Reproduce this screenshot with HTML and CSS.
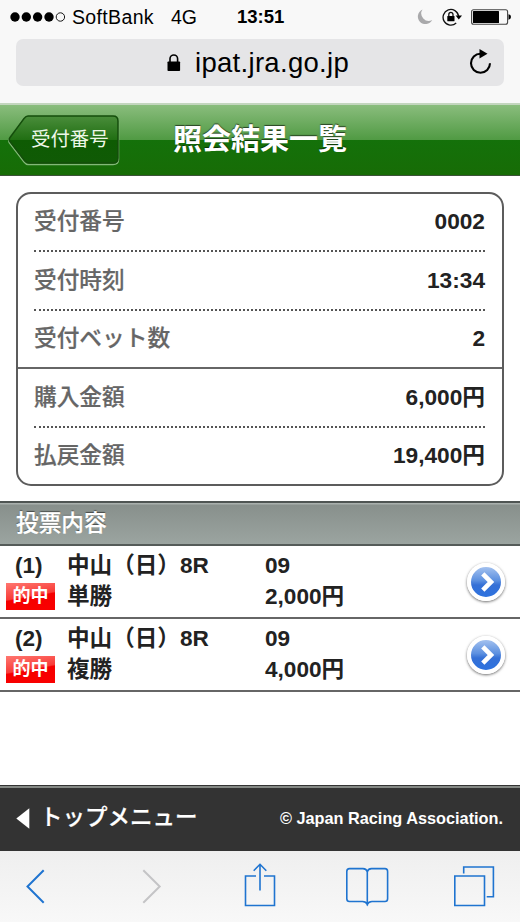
FILE: index.html
```html
<!DOCTYPE html>
<html lang="ja">

<head>
    <meta charset="UTF-8">
    <meta name="viewport" content="width=device-width, initial-scale=1.0">
    <title>照会結果一覧</title>
    <link rel="stylesheet" href="styles.css">
</head>

<body>
    <div class="browser-top">
        <div class="status-bar">
            <div class="carrier">
                <svg class="signal" width="56" height="12" viewBox="0 0 56 12">
                    <circle cx="5" cy="6" r="4.7" />
                    <circle cx="16.3" cy="6" r="4.7" />
                    <circle cx="27.6" cy="6" r="4.7" />
                    <circle cx="39" cy="6" r="4.7" />
                    <circle cx="50.4" cy="6" r="4.2" fill="none" stroke="#000" stroke-width="0.9" />
                </svg>
                <span class="carrier-name">SoftBank</span>
                <span class="network">4G</span>
            </div>
            <div class="clock">13:51</div>
            <div class="indicators">
                <svg width="16" height="18" viewBox="0 0 16 18">
                    <path d="M5.5 1.5 A7.6 7.6 0 1 0 15.2 12 A7.4 7.4 0 0 1 5.5 1.5 Z" fill="#a9a9ab" />
                </svg>
                <svg class="rotation" width="20" height="18" viewBox="0 0 20 18">
                    <path d="M14.2 15 A7.8 7.8 0 1 1 16.6 8.2" fill="none" stroke="#111" stroke-width="1.3" />
                    <path d="M13.6 7.6 H20 L16.8 11.4 Z" />
                    <rect x="5.3" y="8" width="7.2" height="5.2" rx="0.5" />
                    <path d="M6.8 8.5 V6.5 A2.1 2.2 0 0 1 11 6.5 V8.5" fill="none" stroke="#111" stroke-width="1.3" />
                </svg>
                <svg class="battery" width="40" height="16" viewBox="0 0 40 16">
                    <rect x="0.6" y="0.7" width="36" height="14.6" rx="2" fill="none" stroke="#444" stroke-width="1.1" />
                    <rect x="2" y="2" width="26" height="12" rx="0.5" />
                    <path d="M37.5 5.3 Q40 5.6 40 8 Q40 10.4 37.5 10.7 Z" />
                </svg>
            </div>
        </div>
        <div class="address-bar">
            <svg class="lock" width="14" height="18" viewBox="0 0 14 18">
                <rect x="0.5" y="7.5" width="12.6" height="9.5" rx="0.8" />
                <path d="M3 8 V4.8 A3.8 3.8 0 0 1 10.6 4.8 V8" fill="none" stroke="#000" stroke-width="1.6" />
            </svg>
            <span class="url">ipat.jra.go.jp</span>
            <svg class="reload" width="24" height="26" viewBox="0 0 24 26">
                <path d="M12.5 4.7 A9.5 9.5 0 1 0 22 14.2" fill="none" stroke="#000" stroke-width="2.1" />
                <path d="M11.5 0 L19.5 4.7 L11.5 9.4 Z" />
            </svg>
        </div>
    </div>

    <div class="header">
        <a href="#" class="back-button">
            <svg class="back-shape" width="112" height="51" viewBox="0 0 112 51">
                <defs>
                    <linearGradient id="backFill" x1="0" y1="0" x2="0" y2="1">
                        <stop offset="0" stop-color="#4a8d3b" />
                        <stop offset="0.5" stop-color="#216f13" />
                        <stop offset="0.52" stop-color="#0e5b03" />
                        <stop offset="1" stop-color="#105a05" />
                    </linearGradient>
                </defs>
                <path d="M18.5 2.3 H105 Q110.6 2.3 110.6 7.3 V44.5 Q110.6 49.5 105 49.5 H20 Q18 49.5 16 47 L1.5 28 Q0 26 1.5 24 L14.5 4.5 Q16 2.3 18.5 2.3 Z" fill="none" stroke="#83b878" stroke-width="1.3" />
                <path d="M20 1 H105 Q110 1 110 6 V43 Q110 48 105 48 H21 Q18.5 48 16.5 45.5 L2 26.5 Q0.5 24.5 2 22.5 L16 3.5 Q18 1 20 1 Z" fill="url(#backFill)" stroke="#144e0b" stroke-width="1.5" />
            </svg>
            <span class="back-label">受付番号</span>
        </a>
        <h1>照会結果一覧</h1>
    </div>

    <div class="content">
        <div class="summary">
            <div class="summary-row"><span class="label">受付番号</span><span class="value">0002</span></div>
            <div class="summary-row"><span class="label">受付時刻</span><span class="value">13:34</span></div>
            <div class="summary-row group-end"><span class="label">受付ベット数</span><span class="value">2</span></div>
            <div class="summary-row"><span class="label">購入金額</span><span class="value">6,000円</span></div>
            <div class="summary-row"><span class="label">払戻金額</span><span class="value">19,400円</span></div>
        </div>

        <h2>投票内容</h2>

        <div class="bet">
            <div class="bet-number">
                <span class="number">(1)</span>
                <span class="hit">的中</span>
            </div>
            <div class="bet-race">
                <span>中山（日）8R</span>
                <span>単勝</span>
            </div>
            <div class="bet-amount">
                <span>09</span>
                <span>2,000円</span>
            </div>
            <a href="#" class="detail-button">
                <svg width="24" height="24" viewBox="0 0 24 24">
                    <path d="M8.8 3.8 L17 12 L8.8 20.2" fill="none" stroke="#fff" stroke-width="4.6" />
                </svg>
            </a>
        </div>
        <div class="bet">
            <div class="bet-number">
                <span class="number">(2)</span>
                <span class="hit">的中</span>
            </div>
            <div class="bet-race">
                <span>中山（日）8R</span>
                <span>複勝</span>
            </div>
            <div class="bet-amount">
                <span>09</span>
                <span>4,000円</span>
            </div>
            <a href="#" class="detail-button">
                <svg width="24" height="24" viewBox="0 0 24 24">
                    <path d="M8.8 3.8 L17 12 L8.8 20.2" fill="none" stroke="#fff" stroke-width="4.6" />
                </svg>
            </a>
        </div>
    </div>

    <div class="footer">
        <a href="#" class="top-menu">
            <svg width="14" height="22" viewBox="0 0 14 22">
                <path d="M0.3 10.5 L13.3 0.2 V20.8 Z" fill="#fff" />
            </svg>
            <span>トップメニュー</span>
        </a>
        <span class="copyright">© Japan Racing Association.</span>
    </div>

    <div class="toolbar">
        <svg width="520" height="71" viewBox="0 0 520 71" fill="none" stroke="#1f74d0" stroke-width="1.6">
            <!-- back / forward -->
            <path d="M43.7 19.2 L27.5 35.5 L43.7 51.7" stroke-width="2" />
            <path d="M143.3 19.2 L159.7 35.5 L143.3 51.7" stroke="#c4c4c6" stroke-width="2" />
            <!-- share -->
            <path d="M256 25 H245.5 V54.5 H274.5 V25 H264 M260 39.5 V13.5 M253.7 19.8 L260 13.3 L266.3 19.8" />
            <!-- bookmarks -->
            <path d="M367.3 54.5 V20.8 Q366.5 17.6 363 17.6 H349.5 Q346.8 17.6 346.8 20.5 V47.8 Q346.8 50.5 349.5 50.5 H362.5 Q366 50.5 367.3 53.5 Q368.6 50.5 372 50.5 H385 Q387.6 50.5 387.6 47.8 V20.5 Q387.6 17.6 385 17.6 H371.5 Q368 17.6 367.3 20.8" />
            <!-- tabs -->
            <path d="M454.8 25 H484.5 V54.5 H454.8 Z M463.7 22.5 V16 H493.4 V45.7 H486.7" />
        </svg>
    </div>
</body>

</html>
```
FILE: styles.css
```css
* {
    box-sizing: border-box;
}

body {
    margin: 0;
    width: 520px;
    height: 924px;
    overflow: hidden;
    display: flex;
    flex-direction: column;
    background: #fff;
    color: #222;
    font-family: 'Liberation Sans', 'Noto Sans CJK JP', sans-serif;
}

a {
    color: inherit;
    text-decoration: none;
}

svg {
    display: block;
    flex-shrink: 0;
}

h1,
h2 {
    margin: 0;
}

/* Browser chrome */
.browser-top {
    height: 103px;
    background: #f8f8f8;
    color: #000;
}

.status-bar {
    height: 39px;
    padding: 0 9px 5px 10px;
    display: grid;
    grid-template-columns: 227px 1fr auto;
    align-items: center;
}

.carrier {
    display: flex;
    align-items: center;
    font-size: 19.5px;
    line-height: 24px;
}

.carrier-name {
    margin-left: 6px;
    width: 99px;
    letter-spacing: 0.35px;
}

.clock {
    font-size: 18.5px;
    font-weight: bold;
}

.indicators {
    display: flex;
    align-items: center;
}

.rotation {
    margin-left: 9px;
}

.battery {
    margin-left: 9px;
}

.address-bar {
    height: 47px;
    margin: 0 16px;
    padding: 0 12px 0 151px;
    border-radius: 7px;
    background: #e5e5e7;
    display: flex;
    align-items: center;
}

.url {
    margin-left: 14px;
    font-size: 27.5px;
    letter-spacing: 0.3px;
}

.reload {
    margin-left: auto;
    margin-bottom: 1px;
}

/* Page header */
.header {
    height: 73px;
    padding-left: 8px;
    display: flex;
    align-items: center;
    border-top: 2px solid #c3d6be;
    border-bottom: 1px solid #3c5237;
    background: linear-gradient(#8abd7d 0, #509a43 35px, #14710a 35px, #176c06 100%);
    color: #fff;
}

.back-button {
    position: relative;
    width: 112px;
    height: 51px;
    padding: 0 0 2px 23px;
    display: flex;
    align-items: center;
    font-size: 19.4px;
}

.back-shape {
    position: absolute;
    left: 0;
    top: 0;
}

.back-label {
    position: relative;
    color: #eef8e9;
    line-height: 28px;
}

h1 {
    margin-left: 53px;
    font-size: 29px;
    line-height: 40px;
    text-shadow: 0 -1px 1px rgba(0, 0, 0, 0.6);
}

/* Receipt summary */
.content {
    height: 609px;
    padding-top: 16px;
}

.summary {
    margin: 0 16px;
    height: 294px;
    border: 2px solid #5c5c5c;
    border-radius: 15px;
    display: grid;
    grid-template-rows: 58px 59px 58px 59px 56px;
    font-size: 22.7px;
}

.summary-row {
    margin: 0 17px 0 16px;
    padding-bottom: 2px;
    display: flex;
    justify-content: space-between;
    align-items: center;
    line-height: 30px;
    border-bottom: 2px dotted #555;
}

.summary-row.group-end {
    margin: 0;
    padding: 0 17px 2px 16px;
    border-bottom: 2px solid #666;
}

.summary-row:last-child {
    border-bottom: none;
}

.label {
    color: #666;
    font-weight: 500;
    -webkit-text-stroke: 0.2px #666;
}

.value {
    font-weight: bold;
}

h2 {
    margin-top: 15px;
    height: 45px;
    padding-left: 16px;
    border-top: 2px solid #4f5553;
    border-bottom: 2px solid #555b59;
    background: linear-gradient(#a9b0ad 0, #a9b0ad 1px, #88908c 2px, #9ba4a0 100%);
    color: #fff;
    font-size: 22.7px;
    font-weight: 500;
    line-height: 41px;
    text-shadow: 0 -1px 1px rgba(0, 0, 0, 0.5);
    -webkit-text-stroke: 0.3px #fff;
}

/* Bet list */
.bet {
    height: 73px;
    padding: 4px 15px 0 6px;
    display: grid;
    grid-template-columns: 61px 198px 1fr 38px;
    border-bottom: 2px solid #666;
    font-size: 22.6px;
    font-weight: bold;
    line-height: 31px;
}

.bet-number,
.bet-race,
.bet-amount {
    display: flex;
    flex-direction: column;
}

.number {
    padding-left: 9px;
}

.hit {
    width: 49px;
    height: 27px;
    margin-top: 2px;
    background: linear-gradient(170deg, #ff7770 0, #f83c38 48%, #f50000 52%, #fa0000 100%);
    color: #fff;
    font-size: 18px;
    line-height: 27px;
    text-align: center;
}

.detail-button {
    width: 38px;
    height: 38px;
    margin-top: 13px;
    border: 4px solid #fff;
    border-radius: 50%;
    background: linear-gradient(#a3c1ef, #5c90e0 45%, #3570d6 60%, #2d72df);
    box-shadow: 0 1px 3px rgba(0, 0, 0, 0.6);
    display: flex;
    align-items: center;
    justify-content: center;
}

/* Footer */
.footer {
    height: 66px;
    padding: 0 17px 0 16px;
    display: flex;
    align-items: center;
    justify-content: space-between;
    border-top: 1px solid #333;
    box-shadow: inset 0 2px 0 #858985;
    background: #333;
    color: #fff;
}

.top-menu {
    display: flex;
    align-items: center;
    gap: 10px;
    font-size: 22.5px;
    font-weight: 500;
    line-height: 24px;
    -webkit-text-stroke: 0.2px #fff;
}

.top-menu span {
    padding-bottom: 1px;
}

.copyright {
    font-size: 16.3px;
    font-weight: bold;
}

.toolbar {
    height: 71px;
    background: linear-gradient(#efefef, #f8f8f8);
}
```
